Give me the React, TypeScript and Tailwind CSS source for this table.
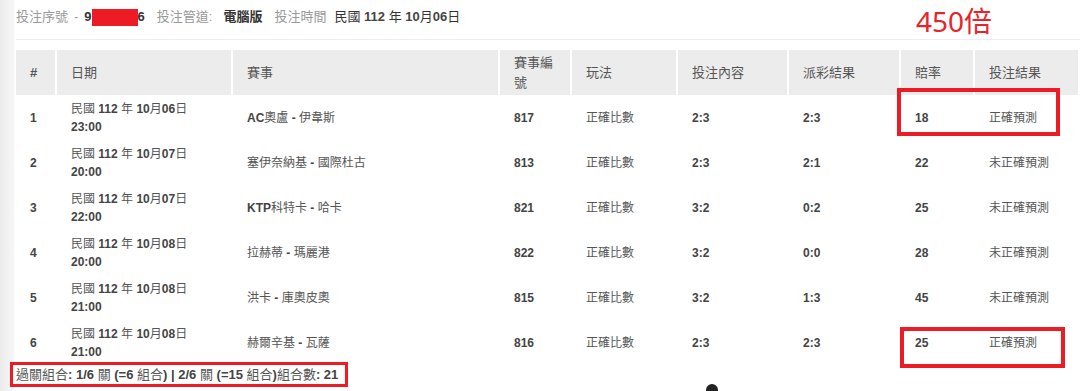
import React from "react";

type Row = {
  no: number;
  date: string;
  time: string;
  match: string;
  code: string;
  play: string;
  bet: string;
  payout: string;
  odds: string;
  result: string;
};

const rows: Row[] = [
  { no: 1, date: "民國 112 年 10月06日", time: "23:00", match: "AC奧盧 - 伊韋斯", code: "817", play: "正確比數", bet: "2:3", payout: "2:3", odds: "18", result: "正確預測" },
  { no: 2, date: "民國 112 年 10月07日", time: "20:00", match: "塞伊奈納基 - 國際杜古", code: "813", play: "正確比數", bet: "2:3", payout: "2:1", odds: "22", result: "未正確預測" },
  { no: 3, date: "民國 112 年 10月07日", time: "22:00", match: "KTP科特卡 - 哈卡", code: "821", play: "正確比數", bet: "3:2", payout: "0:2", odds: "25", result: "未正確預測" },
  { no: 4, date: "民國 112 年 10月08日", time: "20:00", match: "拉赫蒂 - 瑪麗港", code: "822", play: "正確比數", bet: "3:2", payout: "0:0", odds: "28", result: "未正確預測" },
  { no: 5, date: "民國 112 年 10月08日", time: "21:00", match: "洪卡 - 庫奧皮奧", code: "815", play: "正確比數", bet: "3:2", payout: "1:3", odds: "45", result: "未正確預測" },
  { no: 6, date: "民國 112 年 10月08日", time: "21:00", match: "赫爾辛基 - 瓦薩", code: "816", play: "正確比數", bet: "2:3", payout: "2:3", odds: "25", result: "正確預測" },
];

// latin runs come out bold, CJK stays regular (as the fallback font renders it)
function Mixed({ text }: { text: string }) {
  const parts = text.split(/([\u0000-\u00ff]+)/).filter(Boolean);
  return (
    <>
      {parts.map((p, i) =>
        /^[\u0000-\u00ff]+$/.test(p) ? (
          <span key={i} className="font-bold text-[#444]">
            {p}
          </span>
        ) : (
          <span key={i}>{p}</span>
        )
      )}
    </>
  );
}

const th = "h-[45px] bg-[#ececec] border-r-2 border-white text-left font-normal align-middle leading-[20px] pl-[14px]";
const td = "h-[45px] align-middle pl-[14px]";

export default function App() {
  return (
    <div className="relative w-[1080px] h-[391px] overflow-hidden bg-white flex font-['Liberation_Sans','Noto_Sans_CJK_TC',sans-serif] text-[#555]">
      <div className="w-[14px] shrink-0 bg-gradient-to-r from-[#ececec] to-[#f6f6f6]" />

      <div className="flex-1 pl-[2px]">
        {/* info line */}
        <div className="h-[40px] pt-[8px] leading-[18px] text-[13px] border-b border-[#eeeeee] flex items-start">
          <span className="text-[#999]">投注序號</span>
          <span className="text-[#999] mx-[6px]">-</span>
          <span className="font-bold text-[#333]">9</span>
          <span className="inline-block w-[46px] h-[17px] bg-[#ed1c24] mt-[1px]" />
          <span className="font-bold text-[#333]">6</span>
          <span className="text-[#999] ml-[12px]">投注管道:</span>
          <span className="font-bold text-[#333] ml-[11px]">電腦版</span>
          <span className="text-[#999] ml-[12px]">投注時間</span>
          <span className="text-[#333] ml-[8px]">
            <Mixed text="民國 112 年 10月06日" />
          </span>
        </div>

        <table className="mt-[10px] w-[1064px] table-fixed border-separate border-spacing-0">
          <colgroup>
            <col className="w-[41px]" />
            <col className="w-[176px]" />
            <col className="w-[267px]" />
            <col className="w-[72px]" />
            <col className="w-[106px]" />
            <col className="w-[111px]" />
            <col className="w-[112px]" />
            <col className="w-[74px]" />
            <col className="w-[105px]" />
          </colgroup>
          <thead className="text-[13px] text-[#555]">
            <tr>
              <th className={th}>
                <span className="font-bold">#</span>
              </th>
              <th className={th}>日期</th>
              <th className={th}>賽事</th>
              <th className={`${th} pr-[8px]`}>賽事編號</th>
              <th className={th}>玩法</th>
              <th className={th}>投注內容</th>
              <th className={th}>派彩結果</th>
              <th className={th}>賠率</th>
              <th className={`${th} border-r-0`}>投注結果</th>
            </tr>
          </thead>
          <tbody className="text-[12px] leading-[18px]">
            {rows.map((r) => (
              <tr key={r.no}>
                <td className={td}>
                  <span className="font-bold text-[#444]">{r.no}</span>
                </td>
                <td className={td}>
                  <div>
                    <Mixed text={r.date} />
                  </div>
                  <div className="font-bold text-[#444]">{r.time}</div>
                </td>
                <td className={td}>
                  <Mixed text={r.match} />
                </td>
                <td className={td}>
                  <span className="font-bold text-[#444]">{r.code}</span>
                </td>
                <td className={td}>{r.play}</td>
                <td className={td}>
                  <span className="font-bold text-[#444]">{r.bet}</span>
                </td>
                <td className={td}>
                  <span className="font-bold text-[#444]">{r.payout}</span>
                </td>
                <td className={td}>
                  <span className="font-bold text-[#444]">{r.odds}</span>
                </td>
                <td className={td}>{r.result}</td>
              </tr>
            ))}
          </tbody>
        </table>

        <div className="h-[20px] leading-[20px] text-[13px] text-[#555]">
          <Mixed text="過關組合: 1/6 關 (=6 組合) | 2/6 關 (=15 組合)組合數: 21" />
        </div>
      </div>

      {/* annotations */}
      <div className="absolute left-[916px] top-[3px] text-[28px] leading-[36px] text-[#e8242b] font-['Noto_Sans','Noto_Sans_CJK_TC',sans-serif]">
        450倍
      </div>
      <div className="absolute left-[897px] top-[88px] w-[163px] h-[48px] border-4 border-[#ed1c24]" />
      <div className="absolute left-[900px] top-[327px] w-[165px] h-[41px] border-4 border-[#ed1c24]" />
      <div className="absolute left-[10px] top-[362px] w-[338px] h-[25px] border-[3px] border-[#ed1c24]" />
      <div className="absolute left-[706px] top-[384px] w-[12px] h-[12px] rounded-full bg-[#222]" />
    </div>
  );
}
